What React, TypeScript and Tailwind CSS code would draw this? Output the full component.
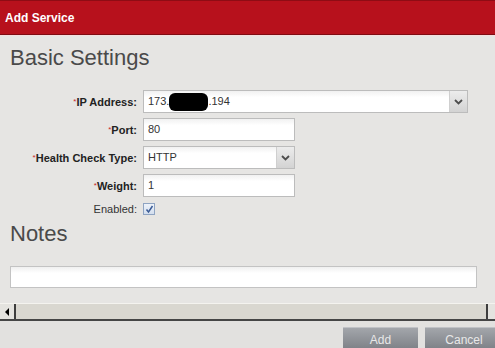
function Chevron() {
    return (
        <svg width="9" height="6" viewBox="0 0 9 6">
            <path d="M1 1 L4.5 4.5 L8 1" fill="none" stroke="#4d4d4d" strokeWidth="1.8" />
        </svg>
    );
}

function Label({ text, required = true }: { text: string; required?: boolean }) {
    return (
        <div className={`text-right text-[11px] leading-[14px] ${required ? 'font-bold text-[#222]' : 'text-[#333]'}`}>
            {required && <span className="text-[#c9242c] text-[8px] align-top font-normal">*</span>}
            {text}
        </div>
    );
}

function TextBox({ children, width }: { children?: React.ReactNode; width: string }) {
    return (
        <div className={`${width} h-[23px] border border-[#bcbcbc] bg-gradient-to-b from-[#f1f1f1] to-white to-[30%] flex items-center pl-[4px] text-[11px] text-[#333]`}>
            {children}
        </div>
    );
}

function SelectBox({ children, width }: { children?: React.ReactNode; width: string }) {
    return (
        <div className={`${width} h-[23px] border border-[#bcbcbc] bg-gradient-to-b from-[#f1f1f1] to-white to-[30%] flex items-center text-[11px] text-[#333]`}>
            <div className="flex-1 pl-[4px] flex items-center">{children}</div>
            <div className="w-[18px] h-full border-l border-[#cfcfcf] bg-gradient-to-b from-[#ececec] to-[#d3d3d3] flex items-center justify-center">
                <Chevron />
            </div>
        </div>
    );
}

function App() {
    return (
        <div className="w-[495px] h-[348px] overflow-hidden bg-[#e6e5e3] flex flex-col" style={{ fontFamily: '"Liberation Sans", Arial, sans-serif' }}>
            {/* header */}
            <div className="h-[35px] shrink-0 bg-[#b7111c] border-t border-[#8e0c14] border-b border-b-[#7f0b12] flex items-center px-[5px]">
                <span className="text-white font-bold text-[12px]">Add Service</span>
            </div>
            <div className="h-[1px] bg-[#f3dede]" />

            <div className="px-[10px] flex-1">
                <h2 className="mt-[9px] text-[22px] leading-[26px] text-[#4a4a4a]">Basic Settings</h2>

                <div className="mt-[19px] grid grid-cols-[127px_auto] gap-x-[6px] gap-y-[5px] items-center">
                    <Label text="IP Address:" />
                    <SelectBox width="w-[325px]">
                        <span>173.</span>
                        <span className="inline-block w-[39px] h-[18px] rounded-[6px] bg-black" />
                        <span>.194</span>
                    </SelectBox>

                    <Label text="Port:" />
                    <TextBox width="w-[152px]">80</TextBox>

                    <Label text="Health Check Type:" />
                    <SelectBox width="w-[152px]">HTTP</SelectBox>

                    <Label text="Weight:" />
                    <TextBox width="w-[152px]">1</TextBox>

                    <Label text="Enabled:" required={false} />
                    <div className="h-[14px] flex items-center">
                        <div className="w-[12px] h-[12px] border border-[#8fa4c2] bg-gradient-to-b from-[#eef3fa] to-[#d3deee] flex items-center justify-center">
                            <svg width="9" height="9" viewBox="0 0 9 9">
                                <path d="M1.5 4.5 L3.5 7 L7.5 1" fill="none" stroke="#3c5c96" strokeWidth="1.5" />
                            </svg>
                        </div>
                    </div>
                </div>

                <h2 className="mt-[5px] text-[22px] leading-[26px] text-[#4a4a4a]">Notes</h2>
                <div className="mt-[19px] w-[467px] h-[22px] border border-[#c3c3c3] bg-gradient-to-b from-[#f0f0f0] to-white to-[30%]" />
            </div>

            {/* horizontal scrollbar */}
            <div className="h-[18px] shrink-0 flex border-t border-[#f4f3ef] border-b-2 border-b-[#454545] bg-[#d9d7d0]">
                <div className="w-[16px] border-r-2 border-[#3d3d3d] bg-[#e4e3df] flex items-center pl-[5px]">
                    <div className="w-0 h-0 border-y-[4px] border-y-transparent border-r-[4px] border-r-black" />
                </div>
                <div className="flex-1" />
                <div className="w-[9px] border-l-2 border-[#3d3d3d] bg-[#e4e3df]" />
            </div>

            {/* footer */}
            <div className="h-[27px] shrink-0 bg-[#e2e1df] flex justify-end gap-[7px] pt-[6px] -mr-[8px]">
                <button className="w-[75px] h-[24px] bg-gradient-to-b from-[#a3a6ab] to-[#7b7e84] border-t border-[#c0c2c6] text-[#e8e8e8] text-[12px]">Add</button>
                <button className="w-[78px] h-[24px] bg-gradient-to-b from-[#a3a6ab] to-[#7b7e84] border-t border-[#c0c2c6] text-[#e8e8e8] text-[12px]">Cancel</button>
            </div>
        </div>
    );
}

export default App;
